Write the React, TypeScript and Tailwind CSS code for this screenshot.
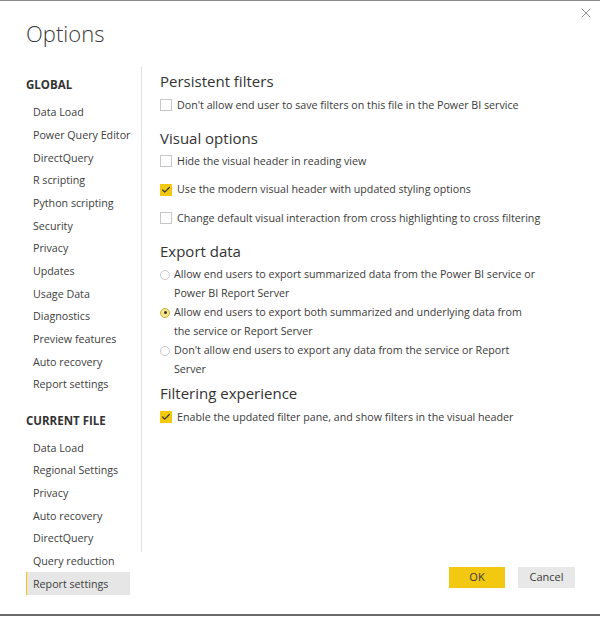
import { X, Check } from "lucide-react";

const globalItems = [
  "Data Load",
  "Power Query Editor",
  "DirectQuery",
  "R scripting",
  "Python scripting",
  "Security",
  "Privacy",
  "Updates",
  "Usage Data",
  "Diagnostics",
  "Preview features",
  "Auto recovery",
  "Report settings",
];

const fileItems = [
  "Data Load",
  "Regional Settings",
  "Privacy",
  "Auto recovery",
  "DirectQuery",
  "Query reduction",
  "Report settings",
];

function NavItem({ label, active }: { label: string; active?: boolean }) {
  return (
    <div
      className={`h-[22.67px] flex items-center whitespace-nowrap ${
        active ? "bg-[#e6e6e6] border-l border-[#f2c811] pl-[6px]" : "pl-[7px]"
      }`}
    >
      {label}
    </div>
  );
}

function CheckRow({ label, checked }: { label: string; checked?: boolean }) {
  return (
    <div className="h-5 flex items-center gap-[5px]">
      {checked ? (
        <span className="w-[12px] h-[12px] bg-[#f2c811] flex items-center justify-center">
          <Check className="w-[10px] h-[10px] text-[#3b3a39]" strokeWidth={3} />
        </span>
      ) : (
        <span className="w-[12px] h-[12px] border border-[#c8c8c8] bg-white" />
      )}
      <span>{label}</span>
    </div>
  );
}

function RadioRow({ lines, checked }: { lines: string[]; checked?: boolean }) {
  return (
    <div className="flex gap-[4px] leading-[19px]">
      <span className="h-[19px] flex items-center">
        {checked ? (
          <span className="w-[10px] h-[10px] rounded-full border border-[#c8b040] bg-[#f6e68a] flex items-center justify-center">
            <span className="w-[3px] h-[3px] rounded-full bg-[#333]" />
          </span>
        ) : (
          <span className="w-[10px] h-[10px] rounded-full border border-[#c8c8c8] bg-white" />
        )}
      </span>
      <div>
        {lines.map((l) => (
          <div key={l}>{l}</div>
        ))}
      </div>
    </div>
  );
}

const heading = "h-6 flex items-center text-[15px] text-[#333]";

export default function App() {
  return (
    <div
      className="w-[600px] h-[617px] bg-white border-t border-[#8a8a8a] text-[#3b3a39] text-[10.7px] flex flex-col"
      style={{ fontFamily: '"Open Sans", "Noto Sans", sans-serif' }}
    >
      <div className="flex justify-between items-start h-[66px]">
        <h1 className="pl-[26px] pt-[16px] text-[22px] font-light leading-8 text-[#3b3a39]">Options</h1>
        <X className="w-[16px] h-[16px] mr-[6px] mt-[4px] text-[#7a7a7a]" strokeWidth={1.25} />
      </div>

      <div className="flex flex-1">
        <div className="w-[141px] pl-[26px] pt-[8px] text-[#404040]">
          <div className="h-5 flex items-center font-bold text-[#333] text-[11.5px]">GLOBAL</div>
          <div className="mt-[6px] w-[104px]">
            {globalItems.map((i) => (
              <NavItem key={"g" + i} label={i} />
            ))}
          </div>
          <div className="mt-[15px] h-5 flex items-center font-bold text-[#333] text-[11.5px]">CURRENT FILE</div>
          <div className="mt-[6px] w-[104px]">
            {fileItems.map((i, n) => (
              <NavItem key={"f" + i} label={i} active={n === fileItems.length - 1} />
            ))}
          </div>
        </div>

        <div className="w-px h-[485px] bg-[#e1e1e1]" />

        <div className="flex-1 pl-[18px] pt-[2px] flex flex-col">
          <h2 className={heading}>Persistent filters</h2>
          <div className="mt-[2px]">
            <CheckRow label="Don't allow end user to save filters on this file in the Power BI service" />
          </div>

          <h2 className={`mt-[11px] ${heading}`}>Visual options</h2>
          <div className="mt-[1px] flex flex-col gap-[8.5px]">
            <CheckRow label="Hide the visual header in reading view" />
            <CheckRow label="Use the modern visual header with updated styling options" checked />
            <CheckRow label="Change default visual interaction from cross highlighting to cross filtering" />
          </div>

          <h2 className={`mt-[11px] ${heading}`}>Export data</h2>
          <div className="mt-[2px]">
            <RadioRow
              lines={["Allow end users to export summarized data from the Power BI service or", "Power BI Report Server"]}
            />
            <RadioRow
              checked
              lines={["Allow end users to export both summarized and underlying data from", "the service or Report Server"]}
            />
            <RadioRow lines={["Don't allow end users to export any data from the service or Report", "Server"]} />
          </div>

          <h2 className={`mt-[2px] ${heading}`}>Filtering experience</h2>
          <div className="mt-[2px]">
            <CheckRow label="Enable the updated filter pane, and show filters in the visual header" checked />
          </div>

          <div className="mt-auto mb-[26px] mr-[25px] flex justify-end gap-[13px]">
            <button className="w-[56px] h-[21px] bg-[#f2c811] text-[#3b3a39] text-[11px]">OK</button>
            <button className="w-[57px] h-[21px] bg-[#e8e8e8] text-[#3b3a39] text-[11px]">Cancel</button>
          </div>
        </div>
      </div>
      <div className="h-[2px] bg-[#6a6a6a]" />
      <div className="h-[1px]" />
    </div>
  );
}
